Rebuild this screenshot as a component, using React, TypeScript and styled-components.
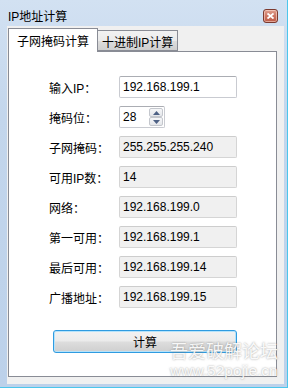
import React from 'react'
import styled, { createGlobalStyle } from 'styled-components'

const GlobalStyle = createGlobalStyle`
  html, body {
    margin: 0;
    padding: 0;
    background: #ffffff;
  }
`

const FONT = `"Liberation Sans", "Noto Sans CJK SC", sans-serif`

const Window = styled.div`
  position: relative;
  width: 288px;
  height: 388px;
  box-sizing: border-box;
  display: flex;
  flex-direction: column;
  padding: 0 3px 3px 7px;
  background: linear-gradient(180deg, #d2e1f2 0%, #c3d6ec 30%, #bcd1ea 100%);
  border-right: 1px solid #4cc6ec;
  border-bottom: 1px solid #4cc6ec;
  font-family: ${FONT};
  overflow: hidden;
`

const TitleBar = styled.div`
  height: 26px;
  display: flex;
  align-items: center;
  justify-content: space-between;
  padding: 5px 6px 0 1px;
  box-sizing: border-box;
`

const Title = styled.div`
  font-size: 12px;
  color: #000;
`

const CloseButton = styled.div`
  width: 15px;
  height: 14px;
  box-sizing: border-box;
  border: 1px solid #7c3a2f;
  border-radius: 3px;
  background: linear-gradient(180deg, #e0a090 0%, #cc7562 50%, #bd5a45 100%);
  box-shadow: inset 0 0 0 1px rgba(255, 225, 215, 0.55);
  display: flex;
  align-items: center;
  justify-content: center;
`

const Client = styled.div`
  flex: 1;
  background: #f0f0f0;
  padding: 2px 7px 7px 1px;
  display: flex;
  flex-direction: column;
`

const TabStrip = styled.div`
  height: 23px;
  display: flex;
  align-items: flex-end;
  position: relative;
  z-index: 1;
`

const Tab = styled.div<{ $active?: boolean }>`
  box-sizing: border-box;
  height: ${p => (p.$active ? 24 : 21)}px;
  padding: 0 ${p => (p.$active ? 8 : 4)}px;
  margin-bottom: ${p => (p.$active ? -1 : 0)}px;
  border: 1px solid #898c95;
  border-bottom: ${p => (p.$active ? 'none' : '1px solid #898c95')};
  border-left: ${p => (p.$active ? '1px solid #898c95' : 'none')};
  background: ${p => (p.$active ? '#ffffff' : 'linear-gradient(180deg, #f2f2f2 0%, #ebebeb 50%, #dddddd 51%, #cfcfcf 100%)')};
  font-size: 12px;
  color: #000;
  display: flex;
  align-items: center;
  padding-top: ${p => (p.$active ? 0 : 1)}px;
`

const Panel = styled.div`
  flex: 1;
  background: #ffffff;
  border: 1px solid #898c95;
  padding: 24px 0 0 40px;
  display: flex;
  flex-direction: column;
`

const Form = styled.div`
  display: grid;
  grid-template-columns: 70px 118px;
  grid-auto-rows: 22px;
  row-gap: 8px;
  align-items: center;
`

const Label = styled.div`
  font-size: 12px;
  color: #000;
  white-space: nowrap;
`

const Field = styled.div<{ $readOnly?: boolean; $width?: number }>`
  box-sizing: border-box;
  height: 22px;
  width: ${p => p.$width ?? 118}px;
  border: 1px solid ${p => (p.$readOnly ? '#d5d5d5' : '#c9cbd1')};
  border-top-color: ${p => (p.$readOnly ? '#cdcdcd' : '#abadb3')};
  border-radius: 2px;
  background: ${p => (p.$readOnly ? '#f0f0f0' : '#ffffff')};
  font-size: 12px;
  color: #000;
  display: flex;
  align-items: center;
  padding-left: 3px;
`

const SpinBox = styled(Field)`
  justify-content: space-between;
  padding-right: 1px;
`

const SpinButtons = styled.div`
  display: flex;
  flex-direction: column;
`

const SpinArrow = styled.div`
  width: 14px;
  height: 9px;
  box-sizing: border-box;
  border: 1px solid #c4c7cd;
  border-radius: 2px;
  background: linear-gradient(180deg, #f6f7f9 0%, #e4e6ea 100%);
  display: flex;
  align-items: center;
  justify-content: center;
`

const ButtonRow = styled.div`
  padding: 22px 0 0 4px;
`

const Button = styled.div`
  box-sizing: border-box;
  width: 184px;
  height: 23px;
  border: 1px solid #2f9be0;
  border-radius: 3px;
  box-shadow: inset 0 0 0 1px #b5e3fb;
  background: linear-gradient(180deg, #f2f2f2 0%, #ebebeb 48%, #dddddd 52%, #cfcfcf 100%);
  font-size: 12px;
  color: #000;
  display: flex;
  align-items: center;
  justify-content: center;
`

// watermark stamped over the bottom-right corner of the screenshot
const Watermark = styled.div`
  position: absolute;
  left: 170px;
  top: 341px;
  display: flex;
  flex-direction: column;
  gap: 3px;
  color: rgba(255, 255, 255, 0.92);
  text-shadow: 0 0 2px rgba(110, 110, 110, 0.7);
  pointer-events: none;
`

const MarkTitle = styled.div`
  font-family: "Noto Sans CJK SC", sans-serif;
  font-size: 18px;
  line-height: 18px;
`

const MarkUrl = styled.div`
  font-family: "Liberation Sans", sans-serif;
  font-size: 15.5px;
  line-height: 17px;
`

const rows: Array<[string, string]> = [
  ['子网掩码：', '255.255.255.240'],
  ['可用IP数：', '14'],
  ['网络：', '192.168.199.0'],
  ['第一可用：', '192.168.199.1'],
  ['最后可用：', '192.168.199.14'],
  ['广播地址：', '192.168.199.15'],
]

const Arrow = ({ up }: { up?: boolean }) => (
  <svg width="7" height="4" viewBox="0 0 7 4">
    <path d={up ? 'M0 4 L3.5 0 L7 4 Z' : 'M0 0 L3.5 4 L7 0 Z'} fill="#4d6185" />
  </svg>
)

const App = () => {
  return (
    <>
      <GlobalStyle />
      <Window>
        <TitleBar>
          <Title>IP地址计算</Title>
          <CloseButton>
            <svg width="7" height="6" viewBox="0 0 7 6">
              <path d="M0.5 0.5 L6.5 5.5 M6.5 0.5 L0.5 5.5" stroke="#ffffff" strokeWidth="1.8" />
            </svg>
          </CloseButton>
        </TitleBar>
        <Client>
          <TabStrip>
            <Tab $active>子网掩码计算</Tab>
            <Tab>十进制IP计算</Tab>
          </TabStrip>
          <Panel>
            <Form>
              <Label>输入IP：</Label>
              <Field>192.168.199.1</Field>
              <Label>掩码位：</Label>
              <SpinBox $width={46}>
                28
                <SpinButtons>
                  <SpinArrow><Arrow up /></SpinArrow>
                  <SpinArrow><Arrow /></SpinArrow>
                </SpinButtons>
              </SpinBox>
              {rows.map(([label, value]) => (
                <React.Fragment key={label}>
                  <Label>{label}</Label>
                  <Field $readOnly>{value}</Field>
                </React.Fragment>
              ))}
            </Form>
            <ButtonRow>
              <Button>计算</Button>
            </ButtonRow>
          </Panel>
        </Client>
        <Watermark>
          <MarkTitle>吾爱破解论坛</MarkTitle>
          <MarkUrl>www.52pojie.cn</MarkUrl>
        </Watermark>
      </Window>
    </>
  )
}

export default App
